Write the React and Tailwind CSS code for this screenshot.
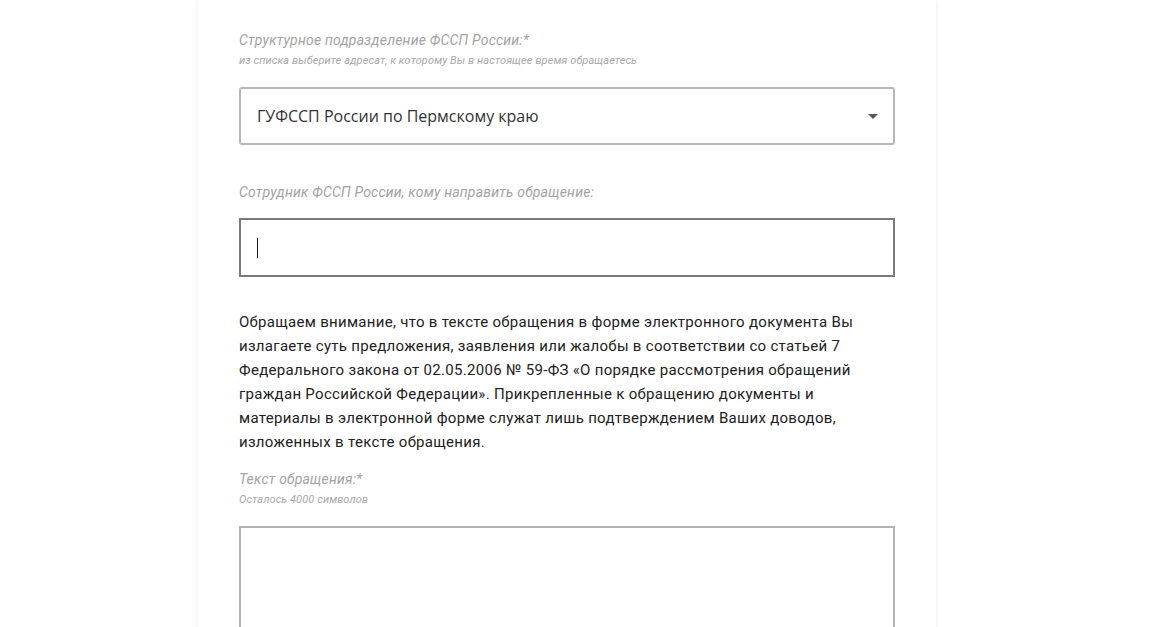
import React from "react";

export default function App() {
  const label = "block text-[14px] leading-[16px] italic tracking-[0.2px] text-[#a3a3a3]";
  const hint = "block text-[11px] leading-[12px] italic tracking-[0.1px] text-[#a8a8a8]";
  return (
    <div className="min-h-[627px] h-[627px] overflow-hidden bg-white" style={{ fontFamily: "Roboto, 'Noto Sans', sans-serif" }}>
      <div className="ml-[198px] w-[738px] h-[700px] bg-white shadow-[0_0_4px_rgba(0,0,0,0.09)] px-[41px] pt-[32px]">
        <span className={label}>Структурное подразделение ФССП России:*</span>
        <span className={`${hint} mt-[7px]`}>из списка выберите адресат, к которому Вы в настоящее время обращаетесь</span>
        <div className="mt-[20px] h-[58px] border-2 border-[#b8b8b8] rounded-[3px] flex items-center justify-between pl-[16px] pr-[15px]">
          <span className="text-[16px] text-[#333333]" style={{ fontFamily: "'Open Sans', sans-serif" }}>
            ГУФССП России по Пермскому краю
          </span>
          <svg width="10" height="5" viewBox="0 0 10 5">
            <polygon points="0,0 10,0 5,5" fill="#555555" />
          </svg>
        </div>
        <span className={`${label} mt-[39px]`}>Сотрудник ФССП России, кому направить обращение:</span>
        <div className="mt-[18px] h-[59px] border-2 border-[#7a7a7a] flex items-center pl-[16px]">
          <div className="w-px h-[20px] bg-[#111111]" />
        </div>
        <p className="mt-[33px] text-[15px] leading-[24px] tracking-[0.3px] text-[#222222]">
          Обращаем внимание, что в тексте обращения в форме электронного документа Вы<br />
          излагаете суть предложения, заявления или жалобы в соответствии со статьей 7<br />
          Федерального закона от 02.05.2006 № 59-ФЗ «О порядке рассмотрения обращений<br />
          граждан Российской Федерации». Прикрепленные к обращению документы и<br />
          материалы в электронной форме служат лишь подтверждением Ваших доводов,<br />
          изложенных в тексте обращения.
        </p>
        <span className={`${label} mt-[17px]`}>Текст обращения:*</span>
        <span className={`${hint} mt-[7px]`}>Осталось 4000 символов</span>
        <div className="mt-[20px] h-[160px] border-2 border-[#b3b3b3]" />
      </div>
    </div>
  );
}
